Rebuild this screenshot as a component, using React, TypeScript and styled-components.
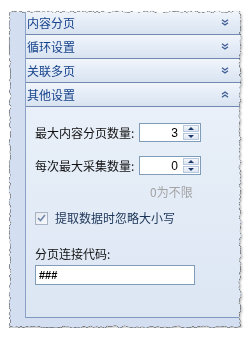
import styled, { createGlobalStyle } from "styled-components";

const GlobalStyle = createGlobalStyle`
  html, body { margin: 0; padding: 0; background: #ffffff; }
  body {
    font-family: "Noto Sans CJK SC", "Liberation Sans", sans-serif;
    font-size: 12px;
  }
`;

// torn paper outline, seeded so it renders the same every time
function tornEdge(w: number, h: number): string {
  let seed = 7;
  const rnd = () => {
    seed = (seed * 9301 + 49297) % 233280;
    return seed / 233280;
  };
  const pts: string[] = [];
  for (let x = 0; x <= w; x += 2) pts.push(`${x}px ${(rnd() * 2.2).toFixed(1)}px`);
  for (let y = 0; y <= h; y += 2) pts.push(`${(w - rnd() * 2.6).toFixed(1)}px ${y}px`);
  for (let x = w; x >= 0; x -= 2) pts.push(`${x}px ${(h - rnd() * 2.4).toFixed(1)}px`);
  for (let y = h; y >= 0; y -= 2) pts.push(`${(rnd() * 2.2).toFixed(1)}px ${y}px`);
  return `polygon(${pts.join(",")})`;
}

const Page = styled.div`
  padding: 11px 0 0 9px;
  filter: drop-shadow(0 0 0.5px rgba(30, 30, 30, 1)) drop-shadow(0 0 0.4px rgba(30, 30, 30, 1))
    drop-shadow(1px 1px 1px rgba(0, 0, 0, 0.3));
`;

const Frame = styled.div<{ $clip: string }>`
  width: 232px;
  height: 317px;
  box-sizing: border-box;
  padding: 0 0 10px 16px;
  background: #d3dff0;
  clip-path: ${(p) => p.$clip};
  display: flex;
`;

const Column = styled.div`
  flex: 1;
  display: flex;
  flex-direction: column;
  border-left: 1px solid #8aa2c6;
`;

const Header = styled.div`
  height: 23px;
  border-bottom: 1px solid #7189b0;
  background: linear-gradient(#f1f5fb, #e3ebf6 55%, #d9e3f1);
  display: flex;
  align-items: center;
  justify-content: space-between;
  padding: 0 12px 0 1px;
  color: #15428b;
  line-height: 14px;
`;

const Chevron = ({ up }: { up?: boolean }) => (
  <svg width="8" height="7" viewBox="0 0 8 7">
    <g fill="none" stroke="#3f5f94" strokeWidth="1.4" transform={up ? "rotate(180 4 3.5)" : undefined}>
      <polyline points="1,0.8 4,3 7,0.8" />
      <polyline points="1,3.8 4,6 7,3.8" />
    </g>
  </svg>
);

const Panel = styled.div`
  flex: 1;
  border-bottom: 1px solid #7f98bf;
  background: linear-gradient(#e9f0f9, #dce6f3);
  padding: 16px 0 0 9px;
  display: flex;
  flex-direction: column;
`;

const FieldRow = styled.div<{ $gap?: number }>`
  display: flex;
  align-items: center;
  height: 19px;
  margin-top: ${(p) => p.$gap ?? 0}px;
`;

const Label = styled.span`
  width: 104px;
  color: #111;
  line-height: 14px;
  white-space: nowrap;
`;

const Spinner = styled.div`
  width: 62px;
  height: 19px;
  box-sizing: border-box;
  border: 1px solid #7f9db9;
  background: #fff;
  display: flex;
  align-items: center;
`;

const SpinValue = styled.span`
  flex: 1;
  text-align: right;
  padding-right: 5px;
  font-family: "Liberation Sans", sans-serif;
  font-size: 12px;
  color: #000;
`;

const SpinButtons = styled.div`
  width: 16px;
  height: 15px;
  margin-right: 1px;
  display: flex;
  flex-direction: column;
  gap: 1px;
`;

const SpinBtn = styled.div`
  flex: 1;
  border: 1px solid #b7c8df;
  background: linear-gradient(#f4f7fb, #dbe5f2);
  display: flex;
  align-items: center;
  justify-content: center;
`;

const Arrow = ({ up }: { up?: boolean }) => (
  <svg width="6" height="3" viewBox="0 0 6 3">
    <polygon points={up ? "0,3 6,3 3,0" : "0,0 6,0 3,3"} fill="#1d3a6a" />
  </svg>
);

const Hint = styled.div`
  margin: 10px 0 0 115px;
  color: #a3a3a3;
  line-height: 14px;
`;

const CheckRow = styled.div`
  display: flex;
  align-items: center;
  gap: 7px;
  margin-top: 12px;
  color: #1c3457;
  line-height: 14px;
`;

const CheckBox = styled.div`
  width: 11px;
  height: 11px;
  border: 1px solid #a8b4c4;
  background: linear-gradient(135deg, #e4e9f0, #f6f8fb);
  display: flex;
  align-items: center;
  justify-content: center;
`;

const CodeLabel = styled.div`
  margin-top: 22px;
  color: #111;
  line-height: 14px;
`;

const TextBox = styled.div`
  margin-top: 4px;
  width: 160px;
  height: 20px;
  box-sizing: border-box;
  border: 1px solid #7f9db9;
  background: #fff;
  padding-left: 3px;
  display: flex;
  align-items: center;
  font-family: "Liberation Sans", sans-serif;
  font-size: 11px;
  font-weight: bold;
  color: #000;
`;

const sections = ["内容分页", "循环设置", "关联多页"];

export default function App() {
  return (
    <>
      <GlobalStyle />
      <Page>
        <Frame $clip={tornEdge(232, 317)}>
          <Column>
            {sections.map((s) => (
              <Header key={s}>
                <span>{s}</span>
                <Chevron />
              </Header>
            ))}
            <Header>
              <span>其他设置</span>
              <Chevron up />
            </Header>
            <Panel>
              <FieldRow>
                <Label>最大内容分页数量:</Label>
                <Spinner>
                  <SpinValue>3</SpinValue>
                  <SpinButtons>
                    <SpinBtn><Arrow up /></SpinBtn>
                    <SpinBtn><Arrow /></SpinBtn>
                  </SpinButtons>
                </Spinner>
              </FieldRow>
              <FieldRow $gap={14}>
                <Label>每次最大采集数量:</Label>
                <Spinner>
                  <SpinValue>0</SpinValue>
                  <SpinButtons>
                    <SpinBtn><Arrow up /></SpinBtn>
                    <SpinBtn><Arrow /></SpinBtn>
                  </SpinButtons>
                </Spinner>
              </FieldRow>
              <Hint>0为不限</Hint>
              <CheckRow>
                <CheckBox>
                  <svg width="9" height="8" viewBox="0 0 9 8">
                    <polyline points="1,4 3.5,6.5 8,1" fill="none" stroke="#6f86ab" strokeWidth="1.6" />
                  </svg>
                </CheckBox>
                <span>提取数据时忽略大小写</span>
              </CheckRow>
              <CodeLabel>分页连接代码:</CodeLabel>
              <TextBox>###</TextBox>
            </Panel>
          </Column>
        </Frame>
      </Page>
    </>
  );
}
